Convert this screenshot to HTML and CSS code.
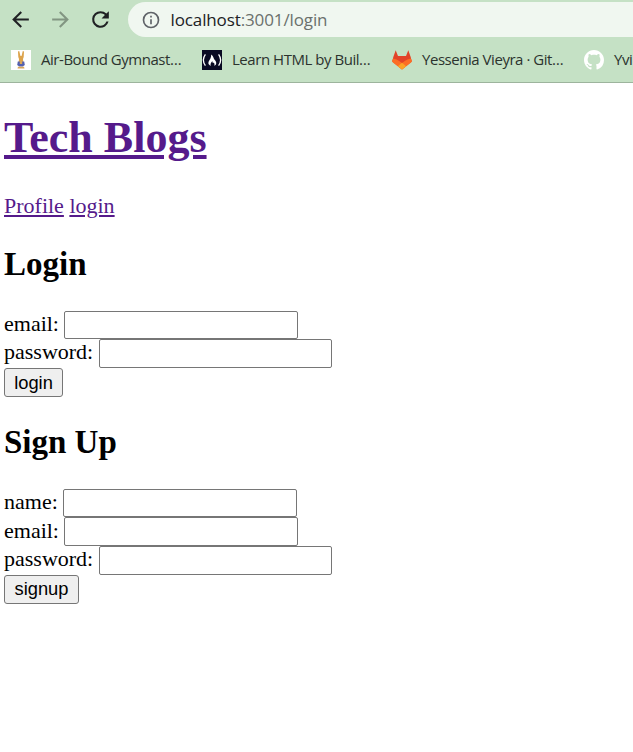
FILE: index.html
```html
<!DOCTYPE html>
<html lang="en">
<head>
<meta charset="utf-8">
<title>Tech Blogs</title>
<link rel="stylesheet" href="styles.css">
</head>
<body>
<header class="browser">
  <div class="toolbar">
    <svg class="nav-icon back" viewBox="0 0 24 24"><path d="M20 11H7.83l5.59-5.59L12 4l-8 8 8 8 1.41-1.41L7.83 13H20v-2z"/></svg>
    <svg class="nav-icon forward" viewBox="0 0 24 24"><path d="M12 4l-1.41 1.41L16.17 11H4v2h12.17l-5.58 5.59L12 20l8-8z"/></svg>
    <svg class="nav-icon reload" viewBox="0 0 24 24"><path d="M17.65 6.35A7.96 7.96 0 0 0 12 4a8 8 0 1 0 7.73 10h-2.08A6 6 0 1 1 12 6c1.66 0 3.14.69 4.22 1.78L13 11h7V4l-2.35 2.35z"/></svg>
    <div class="address">
      <svg class="info" viewBox="0 0 24 24"><path d="M11 7h2v2h-2zm0 4h2v6h-2zm1-9a10 10 0 1 0 0 20 10 10 0 0 0 0-20zm0 18a8 8 0 1 1 0-16 8 8 0 0 1 0 16z"/></svg>
      <span class="url"><span class="host">localhost</span>:3001/login</span>
    </div>
  </div>
  <nav class="bookmarks">
    <div class="bookmark gym">
      <svg viewBox="0 0 20 20"><path fill="#fff" d="M0 0h20v20H0z"/><path fill="#dca34c" d="M7 1.5l1.2-.5 1.3 5h1L11.8 1l1.2.5-.3 5.5-.7 2 .3 3H7.7l.3-3-.7-2z"/><path fill="#5360ae" d="M6.8 11.5h6.4l.6 3.5-2 1.5H8.2L6.2 15z"/><path fill="#d9a657" d="M8.8 10.5h2.4V14H8.8zM7 16.7h6l.5 1.8h-7z"/></svg>
      <span>Air-Bound Gymnast…</span>
    </div>
    <div class="bookmark learn">
      <svg viewBox="0 0 20 20"><path fill="#0a0a23" d="M0 0h20v20H0z"/><path fill="none" stroke="#fff" stroke-width="1.3" d="M3.4 4.3Q-.7 10 3.4 15.7M16.6 4.3q4.1 5.7 0 11.4"/><path fill="#fff" d="M9.2 4.5c2.4 1.8 2 3.5 3.2 5 1.6 1.8 2.4 3.2 1.5 5-.5.8-1 1.1-1.8 1.3.7-1.5.5-2.5-.5-3.3-.2.6-.8.7-1 0-.2-.5-.1-1-.3-1.5-.7 1.4-2.6 2.8-1.2 4.8-2.1-.5-3.3-2-2.5-4 .9-2.2 2.8-3.8 2.6-7.3z"/></svg>
      <span>Learn HTML by Buil…</span>
    </div>
    <div class="bookmark gitlab">
      <svg viewBox="0 0 20 20"><path fill="#e24329" d="M3.7.3L6 6h8L16.3.3 18.7 7l1.1 4.5L10 19.5.2 11.5 1.3 7z"/><path fill="#fc6d26" d="M1.3 8.5Q5 9 7.2 11L10 13l2.8-2Q15 9 18.7 8.5l1.2 2c.1.8-.2 1.5-.8 2L10 19.5.9 12.5q-.9-.8-.8-2z"/><path fill="#fca326" d="M10 12.8l4.2 3.4-4.2 3.3-4.2-3.3z"/></svg>
      <span>Yessenia Vieyra · Git…</span>
    </div>
    <div class="bookmark github">
      <svg viewBox="0 0 16 16"><path fill="#fff" d="M8 0C3.58 0 0 3.58 0 8c0 3.54 2.29 6.53 5.47 7.59.4.07.55-.17.55-.38 0-.19-.01-.82-.01-1.49-2.01.37-2.53-.49-2.69-.94-.09-.23-.48-.94-.82-1.13-.28-.15-.68-.52-.01-.53.63-.01 1.08.58 1.23.82.72 1.21 1.87.87 2.33.66.07-.52.28-.87.51-1.07-1.78-.2-3.64-.89-3.64-3.95 0-.87.31-1.59.82-2.15-.08-.2-.36-1.02.08-2.12 0 0 .67-.21 2.2.82.64-.18 1.32-.27 2-.27s1.36.09 2 .27c1.53-1.04 2.2-.82 2.2-.82.44 1.1.16 1.92.08 2.12.51.56.82 1.27.82 2.15 0 3.07-1.87 3.75-3.65 3.95.29.25.54.73.54 1.48 0 1.07-.01 1.93-.01 2.2 0 .21.15.46.55.38A8.01 8.01 0 0 0 16 8c0-4.42-3.58-8-8-8z"/></svg>
      <span>Yvi</span>
    </div>
  </nav>
</header>
<main class="page">
  <h1><a href="#">Tech Blogs</a></h1>
  <div class="links"><a href="#">Profile</a> <a href="#">login</a></div>
  <h2>Login</h2>
  <form>
    <div class="field"><label for="login-email">email:</label><input id="login-email" type="text"></div>
    <div class="field"><label for="login-password">password:</label><input id="login-password" type="password"></div>
    <button class="login-button" type="button">login</button>
  </form>
  <h2>Sign Up</h2>
  <form>
    <div class="field"><label for="name">name:</label><input id="name" type="text"></div>
    <div class="field"><label for="email">email:</label><input id="email" type="text"></div>
    <div class="field"><label for="password">password:</label><input id="password" type="password"></div>
    <button class="signup-button" type="button">signup</button>
  </form>
</main>
</body>
</html>
```
FILE: styles.css
```css
* { box-sizing: border-box; }
body { margin: 0; background: #fff; overflow: hidden; font: 22px/25px "Liberation Serif", serif; color: #000; }
.browser { height: 83px; background: #c5e1c5; border-bottom: 1px solid #9db49d; overflow: hidden; font-family: "Open Sans", sans-serif; }
.toolbar { display: flex; align-items: center; height: 37px; padding: 2px 0 0 8px; }
.nav-icon { flex: none; width: 25px; height: 25px; fill: #202124; margin-right: 15px; }
.forward { fill: #829582; }
.address { flex: none; display: flex; align-items: center; width: 560px; height: 35px; padding-left: 13px; border-radius: 18px; background: #f0f7f0; }
.info { width: 20px; height: 20px; fill: #5f6368; }
.url { margin-left: 9.5px; font-size: 17px; line-height: 24px; letter-spacing: -.12px; color: #6a706c; white-space: nowrap; }
.host { color: #202124; }
.bookmarks { display: flex; height: 45px; align-items: center; padding-left: 11px; }
.bookmark { flex: none; display: flex; align-items: center; white-space: nowrap; font-size: 15px; line-height: 22px; color: #2c332e; letter-spacing: -.46px; }
.bookmark svg { flex: none; width: 20px; height: 20px; margin-right: 10px; }
.bookmark span { padding-bottom: 2px; }
.gym { width: 191px; }
.learn { width: 190px; }
.gitlab { width: 192px; }
.page { padding: 28px 4px 0; }
a { color: #551a8b; text-decoration: underline; }
h1 { margin: 0; font-size: 44px; line-height: 54px; }
.links { margin-top: 28px; }
h2 { margin: 27px 0 27.6px; font-size: 33px; line-height: 38px; }
form + h2 { margin-top: 26.4px; }
.field { display: flex; align-items: center; height: 28.6px; }
.field label { margin-right: 5.5px; padding-bottom: 3px; }
input { width: 233.6px; height: 28.6px; border: 1px solid #767676; border-radius: 2px; background: #fff; padding: 1px 3px; }
button { display: block; height: 29px; padding: 0; border: 1px solid #767676; border-radius: 3px; background: #efefef; font: 18.33px/25px "Liberation Sans", sans-serif; color: #000; }
.login-button { width: 59px; }
.signup-button { width: 75px; padding-bottom: 1px; }
```
